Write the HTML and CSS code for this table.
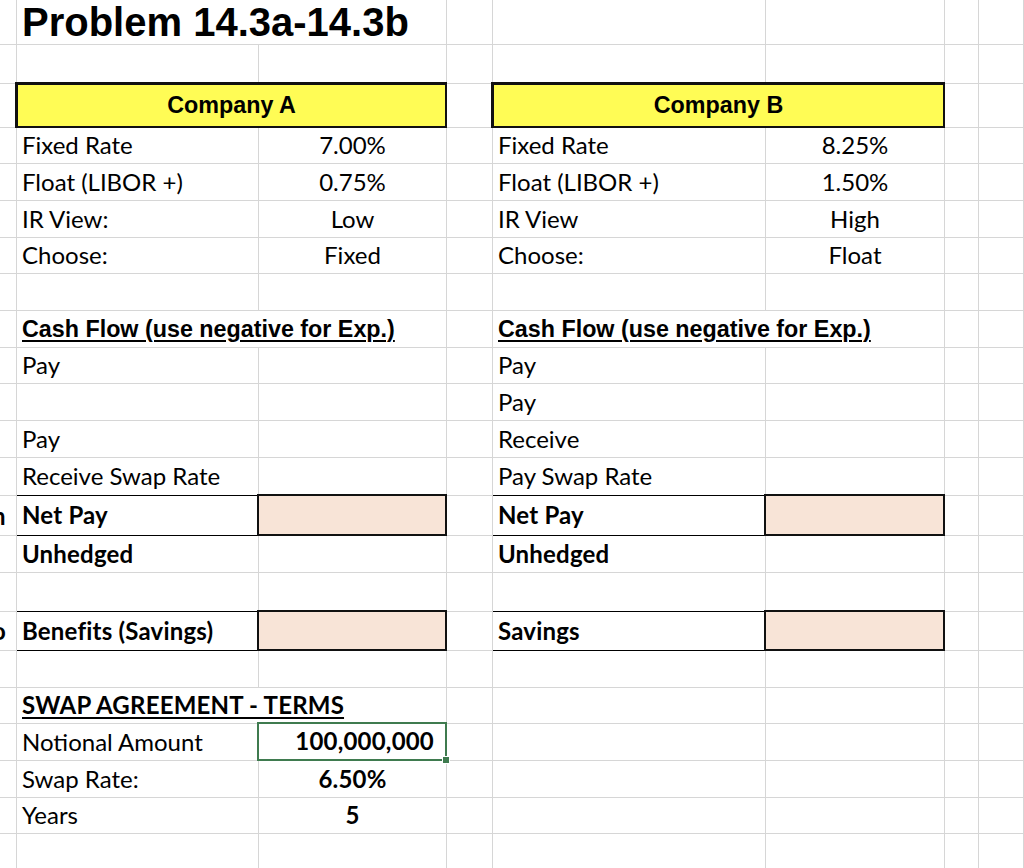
FILE: index.html
```html
<!DOCTYPE html>
<html lang="en">
<head>
<meta charset="utf-8">
<title>Problem 14.3a-14.3b</title>
<link rel="stylesheet" href="styles.css">
</head>
<body>
<div class="sheet">
  <!-- row 1 -->
  <div class="c"></div>
  <div class="c s2 title">Problem 14.3a-14.3b</div>
  <div class="c"></div><div class="c"></div><div class="c"></div><div class="c"></div><div class="c"></div>
  <!-- row 2 -->
  <div class="c"></div><div class="c"></div><div class="c"></div><div class="c"></div><div class="c"></div><div class="c"></div><div class="c"></div><div class="c"></div>
  <!-- row 3 -->
  <div class="c"></div>
  <div class="c box hd">Company A</div>
  <div class="c"></div>
  <div class="c box hd">Company B</div>
  <div class="c"></div><div class="c"></div>
  <!-- row 4 -->
  <div class="c"></div>
  <div class="c">Fixed Rate</div><div class="c ctr">7.00%</div>
  <div class="c"></div>
  <div class="c">Fixed Rate</div><div class="c ctr">8.25%</div>
  <div class="c"></div><div class="c"></div>
  <!-- row 5 -->
  <div class="c"></div>
  <div class="c">Float (LIBOR +)</div><div class="c ctr">0.75%</div>
  <div class="c"></div>
  <div class="c">Float (LIBOR +)</div><div class="c ctr">1.50%</div>
  <div class="c"></div><div class="c"></div>
  <!-- row 6 -->
  <div class="c"></div>
  <div class="c">IR View:</div><div class="c ctr">Low</div>
  <div class="c"></div>
  <div class="c">IR View</div><div class="c ctr">High</div>
  <div class="c"></div><div class="c"></div>
  <!-- row 7 -->
  <div class="c"></div>
  <div class="c">Choose:</div><div class="c ctr">Fixed</div>
  <div class="c"></div>
  <div class="c">Choose:</div><div class="c ctr">Float</div>
  <div class="c"></div><div class="c"></div>
  <!-- row 8 -->
  <div class="c"></div><div class="c"></div><div class="c"></div><div class="c"></div><div class="c"></div><div class="c"></div><div class="c"></div><div class="c"></div>
  <!-- row 9 -->
  <div class="c"></div>
  <div class="c s2 hd u">Cash Flow (use negative for Exp.)</div>
  <div class="c"></div>
  <div class="c s2 hd u">Cash Flow (use negative for Exp.)</div>
  <div class="c"></div><div class="c"></div>
  <!-- row 10 -->
  <div class="c"></div>
  <div class="c">Pay</div><div class="c"></div>
  <div class="c"></div>
  <div class="c">Pay</div><div class="c"></div>
  <div class="c"></div><div class="c"></div>
  <!-- row 11 -->
  <div class="c"></div>
  <div class="c"></div><div class="c"></div>
  <div class="c"></div>
  <div class="c">Pay</div><div class="c"></div>
  <div class="c"></div><div class="c"></div>
  <!-- row 12 -->
  <div class="c"></div>
  <div class="c">Pay</div><div class="c"></div>
  <div class="c"></div>
  <div class="c">Receive</div><div class="c"></div>
  <div class="c"></div><div class="c"></div>
  <!-- row 13 -->
  <div class="c"></div>
  <div class="c">Receive Swap Rate</div><div class="c"></div>
  <div class="c"></div>
  <div class="c">Pay Swap Rate</div><div class="c"></div>
  <div class="c"></div><div class="c"></div>
  <!-- row 14 -->
  <div class="c frag"><span>n</span></div>
  <div class="c line b">Net Pay</div><div class="c peach"></div>
  <div class="c"></div>
  <div class="c line b">Net Pay</div><div class="c peach"></div>
  <div class="c"></div><div class="c"></div>
  <!-- row 15 -->
  <div class="c"></div>
  <div class="c b">Unhedged</div><div class="c"></div>
  <div class="c"></div>
  <div class="c b">Unhedged</div><div class="c"></div>
  <div class="c"></div><div class="c"></div>
  <!-- row 16 -->
  <div class="c"></div><div class="c"></div><div class="c"></div><div class="c"></div><div class="c"></div><div class="c"></div><div class="c"></div><div class="c"></div>
  <!-- row 17 -->
  <div class="c frag"><span>o</span></div>
  <div class="c line b">Benefits (Savings)</div><div class="c peach"></div>
  <div class="c"></div>
  <div class="c line b">Savings</div><div class="c peach"></div>
  <div class="c"></div><div class="c"></div>
  <!-- row 18 -->
  <div class="c"></div><div class="c"></div><div class="c"></div><div class="c"></div><div class="c"></div><div class="c"></div><div class="c"></div><div class="c"></div>
  <!-- row 19 -->
  <div class="c"></div>
  <div class="c s2 b u">SWAP AGREEMENT - TERMS</div>
  <div class="c"></div><div class="c"></div><div class="c"></div><div class="c"></div><div class="c"></div>
  <!-- row 20 -->
  <div class="c"></div>
  <div class="c">Notional Amount</div><div class="c sel b">100,000,000<span class="handle"></span></div>
  <div class="c"></div><div class="c"></div><div class="c"></div><div class="c"></div><div class="c"></div>
  <!-- row 21 -->
  <div class="c"></div>
  <div class="c">Swap Rate:</div><div class="c ctr b">6.50%</div>
  <div class="c"></div><div class="c"></div><div class="c"></div><div class="c"></div><div class="c"></div>
  <!-- row 22 -->
  <div class="c"></div>
  <div class="c">Years</div><div class="c ctr b">5</div>
  <div class="c"></div><div class="c"></div><div class="c"></div><div class="c"></div><div class="c"></div>
  <!-- row 23 -->
  <div class="c"></div><div class="c"></div><div class="c"></div><div class="c"></div><div class="c"></div><div class="c"></div><div class="c"></div><div class="c"></div>
</div>
</body>
</html>
```
FILE: styles.css
```css
html, body {
  margin: 0;
  padding: 0;
  background: #fff;
}
body {
  width: 1024px;
  height: 868px;
  overflow: hidden;
}
.sheet {
  display: grid;
  grid-template-columns: 17px 242px 188px 46px 273px 179px 34px 45px;
  grid-template-rows: 45px 39px 44px 36px 37px 37px 36px 37px 37px 36px 37px 37px 38px 40px 37px 39px 39px 37px 36px 37px 37px 36px 37px;
  font-family: Lato, "Liberation Sans", sans-serif;
  font-size: 24px;
  line-height: 24px;
  color: #000;
}
.c {
  box-sizing: border-box;
  border-right: 1px solid #d6d6d6;
  border-bottom: 1px solid #d6d6d6;
  display: flex;
  align-items: center;
  padding: 0 5px 1px;
  white-space: nowrap;
  min-width: 0;
}
.s2 { grid-column: span 2; }
.ctr { justify-content: center; }
.b { font-weight: 700; letter-spacing: 0.2px; }
.u { text-decoration: underline; text-decoration-thickness: 2px; text-underline-offset: 3px; }
.title {
  font-family: "Liberation Sans", Arial, sans-serif;
  font-weight: 700;
  font-size: 40px;
  line-height: 40px;
}
.hd {
  font-family: "Liberation Sans", Arial, sans-serif;
  font-weight: 700;
  font-size: 23.3px;
}
.box {
  grid-column: span 2;
  margin: -2px 0 0 -2px;
  border: 2px solid #111;
  border-width: 3px 2px 2px 3px;
  background: #fffc55;
  justify-content: center;
}
.line {
  margin-top: -1px;
  border-top: 1px solid #000;
  border-bottom-color: #000;
}
.peach {
  margin: -2px 0 0 -2px;
  border: 2px solid #111;
  background: #f8e4d7;
}
.sel {
  margin: -2px 0 0 -2px;
  border: 2px solid #3f7b4f;
  justify-content: flex-end;
  padding-right: 11px;
  position: relative;
}
.handle {
  position: absolute;
  right: -5px;
  bottom: -5px;
  width: 6px;
  height: 6px;
  background: #3f7b4f;
  border: 1px solid #fff;
}
.frag {
  overflow: hidden;
  padding: 0;
  font-weight: 700;
}
.frag span {
  margin-left: -8px;
}
```
